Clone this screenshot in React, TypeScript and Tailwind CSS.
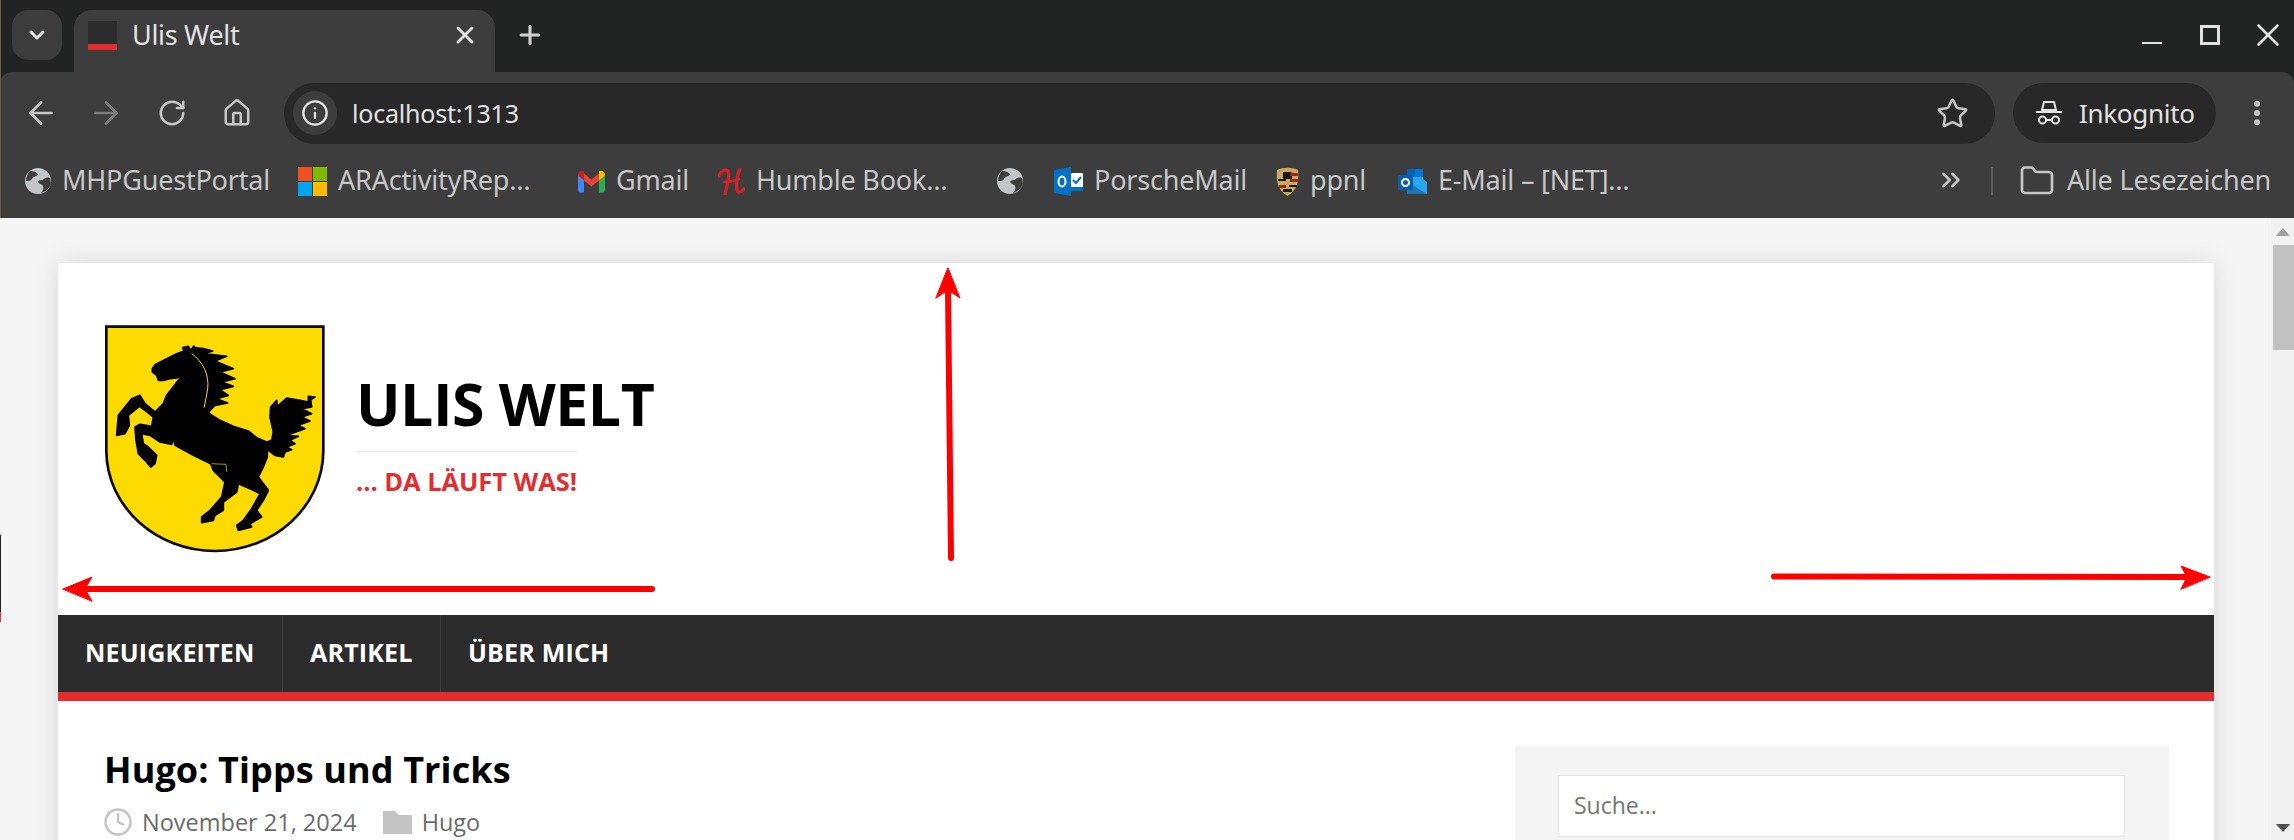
import { ArrowLeft, ArrowRight, ChevronDown, ChevronsRight, Clock, EllipsisVertical, Folder, House, Info, Plus, RotateCw, Star, X } from "lucide-react";

function Globe({ className }: { className: string }) {
  return (
    <svg viewBox="0 0 26 26" className={className}>
      <circle cx="13" cy="13" r="13" fill="#c3c6c9" />
      <path d="M5 3c4 0 6 1 8 3-1 3-5 2-6 5-1 2-4 2-6 2 0-4 2-8 4-10zM25 10c-3-1-6 0-7 2-2 0-4 0-5 2 1 2 4 2 5 4 1 2 0 5-2 7 4-1 9-5 10-9z" fill="#3d3d3d" />
    </svg>
  );
}

function Microsoft() {
  return (
    <div className="grid h-[29px] w-[29px] shrink-0 grid-cols-2 gap-[1px]">
      <div className="bg-[#f25022]" />
      <div className="bg-[#7fba00]" />
      <div className="bg-[#00a4ef]" />
      <div className="bg-[#ffb900]" />
    </div>
  );
}

function Gmail() {
  return (
    <svg viewBox="0 0 27 22" className="h-[23px] w-[27px] shrink-0">
      <path d="M0 4v16c0 1 1 2 2 2h4V9z" fill="#4285f4" />
      <path d="M27 4v16c0 1-1 2-2 2h-4V9z" fill="#34a853" />
      <path d="M6 3v7l7.500 6 7.500-6V3l-7.500 6z" fill="#ea4335" />
      <path d="M0 4c0-3 4-5 6-3v9L0 5z" fill="#c5221f" />
      <path d="M27 4c0-3-4-5-6-3v9l6-5z" fill="#fbbc04" />
    </svg>
  );
}

function Humble() {
  return (
    <svg viewBox="0 0 27 27" className="h-[27px] w-[27px] shrink-0" fill="none" stroke="#cc2229" strokeLinecap="round">
      <path d="M1 8C3 2 8 1 10 3c2 3 0 12-3 23" strokeWidth="3.500" />
      <path d="M22 1c-3 5-4 15-3 21 1 3 4 3 7-1" strokeWidth="3.500" />
      <path d="M6 14c5 0 10-1 15-3" strokeWidth="2.500" />
    </svg>
  );
}

function Outlook({ small }: { small?: boolean }) {
  return (
    <svg viewBox="0 0 29 29" className="h-[29px] w-[29px] shrink-0">
      {small ? (
        <>
          <path d="M9 2h16v10l4 3v12H9z" fill="#28a8ea" />
          <path d="M9 2h8v8H9z" fill="#0364b8" />
          <path d="M17 2h8v8h-8z" fill="#0078d4" />
          <path d="M9 15l20 12H9z" fill="#14447d" opacity=".5" />
          <rect x="0" y="8" width="15" height="15" rx="1.500" fill="#0a5fb0" />
          <circle cx="7.500" cy="15.500" r="3.500" fill="none" stroke="#fff" strokeWidth="2" />
        </>
      ) : (
        <>
          <path d="M17 6h12v18H17z" fill="#fff" />
          <path d="M0 3l17-3v29L0 26z" fill="#0072c6" />
          <ellipse cx="8" cy="14.500" rx="3.500" ry="5" fill="none" stroke="#fff" strokeWidth="2" />
          <path d="M19 13l3 3 5-6" fill="none" stroke="#0072c6" strokeWidth="2" />
          <path d="M17 20h12v4H17z" fill="#0072c6" />
        </>
      )}
    </svg>
  );
}

function Porsche() {
  return (
    <svg viewBox="0 0 23 29" className="h-[29px] w-[23px] shrink-0">
      <path d="M1 3c6-3 15-3 21 0 1 10 0 20-10.500 26C1 23 0 13 1 3z" fill="#c9a95c" />
      <path d="M7 5h9v7H7z" fill="#1c1a18" />
      <path d="M14 6h8v3h-8zM14 12h8v3h-8zM3 18h7v3H3z" fill="#a6241f" />
      <path d="M2 12h8v2H2zM13 18h8v2h-8zM7 22h9v3H7z" fill="#1c1a18" />
    </svg>
  );
}

function Incognito() {
  return (
    <svg viewBox="0 0 26 26" className="h-[26px] w-[26px] shrink-0" fill="none" stroke="#e3e3e3" strokeWidth="2">
      <path d="M8 2h10l2 8H6z" />
      <path d="M0 12h26" />
      <circle cx="6.500" cy="20" r="3.500" />
      <circle cx="19.500" cy="20" r="3.500" />
      <path d="M10 20h6" />
    </svg>
  );
}

function Bookmark({ icon, label, width }: { icon: React.ReactNode; label?: string; width: string }) {
  return (
    <div className={`flex shrink-0 items-center ${width}`}>
      {icon}
      {label && <span className="-mt-[3px] ml-[11px] whitespace-nowrap text-[27px] leading-none tracking-[-0.2px] text-[#c7c7c7]">{label}</span>}
    </div>
  );
}

function Shield() {
  return (
    <svg viewBox="135 75 660 682" className="h-[228px] w-[220px] shrink-0">
      <path d="M139 79H790V450C790 620 640 752 465 752C290 752 139 620 139 450Z" fill="#fedb00" stroke="#0a0a0a" strokeWidth="8" />
      <path
        d="M277 205L285 193L320 175L350 160L372 152L368 142L385 138L392 150L402 137L405 142L430 145L458 152L432 160L500 168L465 182L520 205L480 215L525 235L485 245L520 258L480 268L505 285L470 295L503 308L465 315L450 330L445 338L480 360L520 378L565 392L590 412L620 425L635 420L640 395L630 350L632 320L650 300L652 318L680 293L720 300L745 305L745 288L765 290L752 298L755 320L725 325L755 340L725 350L750 362L715 375L735 385L680 405L715 408L690 420L705 430L680 440L695 448L675 455L670 470L645 465L622 448L622 470L610 500L595 530L625 570L610 600L590 630L605 650L570 670L575 680L535 690L530 675L550 660L575 625L600 580L570 565L535 550L530 575L490 605L490 630L465 645L460 660L425 667L425 650L450 630L485 590L495 545L460 510L452 490L400 465L345 435L340 415L335 432L300 425L270 405L245 400L250 430L265 440L290 465L285 490L272 500L255 480L235 460L228 420L225 380L240 372L275 378L280 350L255 330L238 318L205 345L208 375L195 400L170 405L175 345L215 295L240 285L255 310L285 335L310 310L320 285L355 240L375 230L330 235L310 240L295 240L290 225L277 215Z"
        fill="#000"
        stroke="#000"
        strokeWidth="5"
        strokeLinejoin="round"
      />
      <path d="M395 160C430 185 448 225 443 265C440 285 436 305 432 322" fill="none" stroke="#fedb00" strokeWidth="3" />
      <path d="M455 490L498 492L500 515" fill="none" stroke="#fedb00" strokeWidth="2" />
    </svg>
  );
}

function NavLink({ label, className }: { label: string; className: string }) {
  return <div className={`flex items-center pb-[2px] text-[25px] font-bold tracking-[0.2px] text-white ${className}`}>{label}</div>;
}

export default function App() {
  return (
    <div className="relative flex h-[840px] w-[2294px] flex-col overflow-hidden bg-[#222423] font-['Noto_Sans',sans-serif]">
      {/* tab strip */}
      <div className="flex h-[72px] shrink-0 items-start pt-[10px]">
        <div className="ml-[12px] flex h-[50px] w-[50px] items-center justify-center rounded-[16px] bg-[#3c3c3c]">
          <ChevronDown size={24} strokeWidth={3} color="#e3e3e3" />
        </div>
        <div className="relative ml-[12px] flex h-[62px] w-[421px] items-center rounded-t-[18px] bg-[#3d3d3d] pb-[12px] pl-[14px]">
          <div className="flex h-[29px] w-[29px] flex-col">
            <div className="flex-1 bg-[#2c2c2c]" />
            <div className="h-[6px] bg-[#e32d2f]" />
          </div>
          <span className="-mt-[2px] ml-[15px] w-[300px] text-[27px] leading-none tracking-[-0.3px] text-[#e3e3e3]">Ulis Welt</span>
          <X size={28} strokeWidth={2.5} color="#e3e3e3" className="absolute left-[377px] top-[11px]" />
        </div>
        <Plus size={30} strokeWidth={2.5} color="#d0d0d0" className="ml-[20px] mt-[10px]" />
        <div className="ml-auto mr-[7px] mt-[15px] flex items-start gap-[38px]">
          <div className="mt-[17px] h-[2px] w-[20px] bg-[#e3e3e3]" />
          <div className="h-[20px] w-[20px] border-[3px] border-[#e3e3e3]" />
          <X size={38} strokeWidth={1.6} color="#e3e3e3" className="-ml-[9px] -mt-[9px]" />
        </div>
      </div>

      {/* toolbar */}
      <div className="flex h-[72px] shrink-0 items-center rounded-t-[12px] bg-[#3d3d3d] pt-[10px]">
        <div className="flex h-[61px] w-[284px] items-center pl-[23px]">
          <ArrowLeft size={36} strokeWidth={1.8} color="#c7c7c7" />
          <ArrowRight size={36} strokeWidth={1.8} color="#7d7d7d" className="ml-[29px]" />
          <RotateCw size={30} strokeWidth={2} color="#c7c7c7" className="ml-[33px]" />
          <House size={30} strokeWidth={2} color="#c7c7c7" className="ml-[35px]" />
        </div>
        <div className="flex h-[61px] w-[1711px] items-center rounded-full bg-[#282828] pl-[9px]">
          <div className="flex h-[44px] w-[44px] items-center justify-center rounded-full bg-[#3d3d3d]">
            <Info size={28} strokeWidth={2} color="#e3e3e3" />
          </div>
          <span className="ml-[15px] text-[25px] leading-none tracking-[-0.2px] text-[#e3e3e3]">localhost:1313</span>
          <Star size={33} strokeWidth={1.8} color="#c7c7c7" className="ml-auto mr-[26px]" />
        </div>
        <div className="ml-[18px] flex h-[60px] w-[203px] items-center rounded-full bg-[#282828] pl-[23px]">
          <Incognito />
          <span className="ml-[17px] text-[26px] leading-none tracking-[-0.3px] text-[#e3e3e3]">Inkognito</span>
        </div>
        <EllipsisVertical size={32} strokeWidth={2.5} color="#c7c7c7" className="ml-[25px]" />
      </div>

      {/* bookmarks */}
      <div className="flex h-[74px] shrink-0 items-center bg-[#3d3d3d] pl-[25px]">
        <Bookmark width="w-[273px]" label="MHPGuestPortal" icon={<Globe className="h-[26px] w-[26px] shrink-0" />} />
        <Bookmark width="w-[280px]" label="ARActivityRep…" icon={<Microsoft />} />
        <Bookmark width="w-[140px]" label="Gmail" icon={<Gmail />} />
        <Bookmark width="w-[279px]" label="Humble Book…" icon={<Humble />} />
        <Bookmark width="w-[57px]" icon={<Globe className="h-[26px] w-[26px] shrink-0" />} />
        <Bookmark width="w-[222px]" label="PorscheMail" icon={<Outlook />} />
        <Bookmark width="w-[122px]" label="ppnl" icon={<Porsche />} />
        <Bookmark width="w-[538px]" label="E-Mail – [NET]…" icon={<Outlook small />} />
        <ChevronsRight size={30} strokeWidth={2} color="#c7c7c7" className="-mt-[2px]" />
        <div className="ml-[25px] h-[28px] w-[2px] bg-[#5c5c5c]" />
        <Folder size={36} strokeWidth={1.8} color="#c7c7c7" className="ml-[26px]" />
        <span className="-mt-[3px] ml-[12px] whitespace-nowrap text-[27px] leading-none tracking-[-0.2px] text-[#c7c7c7]">Alle Lesezeichen</span>
      </div>

      {/* page */}
      <div className="flex flex-1 bg-[#f5f5f5]">
        <div className="flex-1 pl-[58px] pr-[57px] pt-[45px]">
          <div className="bg-white font-['Open_Sans',sans-serif] shadow-[0_0_24px_rgba(0,0,0,0.12)]">
            <header className="flex h-[352px] pl-[47px] pt-[62px]">
              <Shield />
              <div className="ml-[31px] pt-[38px]">
                <h1 className="text-[59px] font-bold leading-[80px] tracking-[-0.5px] text-black">ULIS WELT</h1>
                <div className="mt-[8px] h-[1px] w-[221px] bg-[#e8e8e8]" />
                <p className="mt-[12px] text-[25.500px] font-bold leading-[34px] tracking-[-0.05px] text-[#e32d2f]">... DA LÄUFT WAS!</p>
              </div>
            </header>
            <nav className="flex h-[86px] border-b-[9px] border-[#e32d2f] bg-[#2c2c2c]">
              <NavLink label="NEUIGKEITEN" className="w-[225px] border-r border-[#3f3f3f] pl-[27px]" />
              <NavLink label="ARTIKEL" className="w-[158px] border-r border-[#3f3f3f] pl-[27px]" />
              <NavLink label="ÜBER MICH" className="pl-[27px]" />
            </nav>
            <div className="flex pl-[47px] pr-[45px] pt-[45px]">
              <div className="flex-1">
                <h2 className="-mt-[1px] -ml-[1px] text-[36px] font-bold leading-[50px] tracking-[0.1px] text-black">Hugo: Tipps und Tricks</h2>
                <div className="mt-[12px] flex items-center text-[23.500px] leading-[30px] text-[#6b6b6b]">
                  <Clock size={30} strokeWidth={2} color="#c4c4c4" className="-ml-[2.500px]" />
                  <span className="ml-[9.500px]">November 21, 2024</span>
                  <svg viewBox="0 0 29 24" className="ml-[26px] h-[24px] w-[29px]" fill="#c4c4c4">
                    <path d="M0 1h12l4 4h13v19H0z" />
                  </svg>
                  <span className="ml-[10px]">Hugo</span>
                </div>
              </div>
              <aside className="h-[200px] w-[654px] bg-[#f4f4f4] px-[43px] pt-[29px]">
                <div className="flex h-[62px] w-[567px] items-center border border-[#e8e8e8] bg-white pl-[15px] pb-[1px] text-[23px] text-[#757575]">Suche...</div>
              </aside>
            </div>
          </div>
        </div>
        {/* scrollbar */}
        <div className="flex w-[23px] flex-col items-center bg-[#f1f1f1]">
          <div className="mt-[10px] h-0 w-0 border-x-[7px] border-b-[8px] border-x-transparent border-b-[#a3a3a3]" />
          <div className="ml-[2px] mt-[9px] h-[105px] w-[21px] bg-[#c1c1c1]" />
          <div className="mt-[474px] h-0 w-0 border-x-[7px] border-t-[8px] border-x-transparent border-t-[#505050]" />
        </div>
      </div>

      {/* hand-drawn annotation arrows */}
      <svg viewBox="0 0 2294 840" className="pointer-events-none absolute inset-0 h-[840px] w-[2294px]">
        <g fill="#ff0000" stroke="#ff0000" strokeWidth="6" strokeLinecap="round">
          <path d="M951 558L948 292" fill="none" />
          <path d="M948 268L960 298L948 290L936 298Z" strokeWidth="1" />
          <path d="M652 589H85" fill="none" />
          <path d="M63 589L92 577L85 589L92 601Z" strokeWidth="1" />
          <path d="M1774 576.500L2190 577" fill="none" />
          <path d="M2210 577L2181 566L2187 577L2181 589Z" strokeWidth="1" />
        </g>
      </svg>
      <div className="absolute left-0 top-0 h-[218px] w-[1px] bg-[#6a5a52]" />
      <div className="absolute left-0 top-[535px] h-[77px] w-[1px] bg-[#222]" />
      <div className="absolute left-0 top-[612px] h-[10px] w-[1px] bg-[#e32d2f]" />
    </div>
  );
}
